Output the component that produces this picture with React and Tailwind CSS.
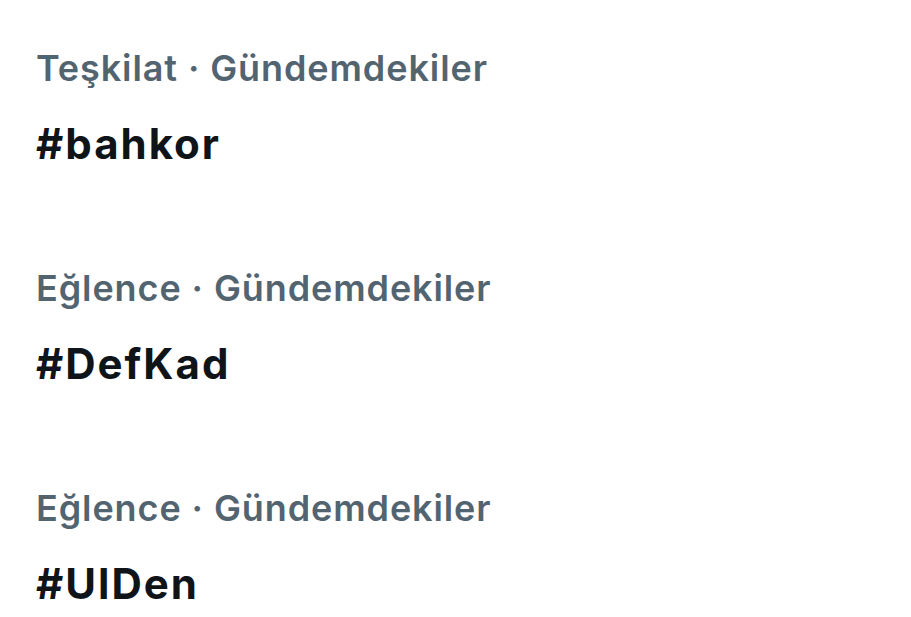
const trends = [
  { category: "Teşkilat", tag: "#bahkor" },
  { category: "Eğlence", tag: "#DefKad" },
  { category: "Eğlence", tag: "#UlDen" },
];

export default function App() {
  return (
    <div
      className="min-h-screen w-full bg-white px-[36px] pt-[44px]"
      style={{ fontFamily: 'Inter, "Open Sans", sans-serif' }}
    >
      <div className="flex flex-col gap-[96px]">
        {trends.map((t, i) => (
          <div key={i} className="flex flex-col gap-[28px]">
            <div className="text-[36px] font-semibold leading-[48px] tracking-[0.9px] text-[#536471]">
              {t.category} · Gündemdekiler
            </div>
            <div className="text-[42px] font-bold leading-[48px] tracking-[2px] text-[#0f1419]">
              {t.tag}
            </div>
          </div>
        ))}
      </div>
    </div>
  );
}
